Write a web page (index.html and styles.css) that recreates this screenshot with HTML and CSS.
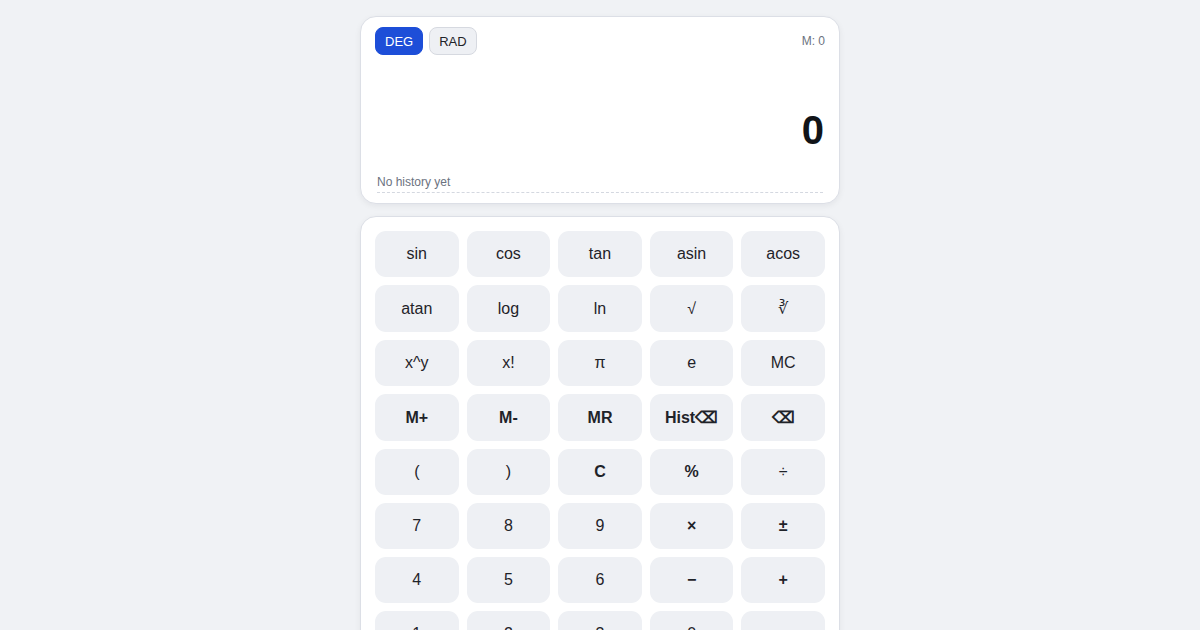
FILE: index.html
```html
<!DOCTYPE html>
<html>
<head>
    <meta charset="utf-8">
    <meta name="viewport" content="width=device-width, initial-scale=1">
    <title>Scientific Calculator</title>
    <link rel="stylesheet" href="styles.css">
</head>
<body>
    <div class="calc">
        <div class="card screen">
            <div class="screen-top">
                <div class="modes">
                    <button class="mode active">DEG</button>
                    <button class="mode">RAD</button>
                </div>
                <div class="memory">M: 0</div>
            </div>
            <div class="display">0</div>
            <div class="history">No history yet</div>
        </div>

        <div class="card keypad">
            <button class="key">sin</button>
            <button class="key">cos</button>
            <button class="key">tan</button>
            <button class="key">asin</button>
            <button class="key">acos</button>

            <button class="key">atan</button>
            <button class="key">log</button>
            <button class="key">ln</button>
            <button class="key">√</button>
            <button class="key">∛</button>

            <button class="key">x^y</button>
            <button class="key">x!</button>
            <button class="key">π</button>
            <button class="key">e</button>
            <button class="key">MC</button>

            <button class="key strong">M+</button>
            <button class="key strong">M-</button>
            <button class="key strong">MR</button>
            <button class="key strong">Hist⌫</button>
            <button class="key strong">⌫</button>

            <button class="key">(</button>
            <button class="key">)</button>
            <button class="key strong">C</button>
            <button class="key strong">%</button>
            <button class="key">÷</button>

            <button class="key">7</button>
            <button class="key">8</button>
            <button class="key">9</button>
            <button class="key strong">×</button>
            <button class="key strong">±</button>

            <button class="key">4</button>
            <button class="key">5</button>
            <button class="key">6</button>
            <button class="key strong">−</button>
            <button class="key strong">+</button>

            <button class="key">1</button>
            <button class="key">2</button>
            <button class="key">3</button>
            <button class="key">0</button>
            <button class="key">.</button>
        </div>
    </div>
</body>
</html>
```

FILE: styles.css
```css
body, html {
    margin: 0;
    padding: 0;
}

body {
    background: #f0f2f5;
    font-family: 'Liberation Sans', Arial, sans-serif;
    color: #1f2329;
}

.calc {
    width: 480px;
    margin: 16px auto 0;
    display: flex;
    flex-direction: column;
    gap: 12px;
}

.card {
    background: #ffffff;
    border: 1px solid #dcdfe6;
    border-radius: 16px;
    box-shadow: 0 2px 6px rgba(15, 23, 42, 0.06);
}

.screen {
    padding: 10px 14px;
}

.screen-top {
    display: flex;
    justify-content: space-between;
    align-items: center;
}

.modes {
    display: flex;
    gap: 6px;
}

.mode {
    height: 28px;
    padding: 0 9px;
    border: 1px solid #d6d9e0;
    border-radius: 8px;
    background: #eef0f4;
    color: #1f2329;
    font-family: inherit;
    font-size: 13px;
}

.mode.active {
    background: #1d4ed8;
    border-color: #1d4ed8;
    color: #ffffff;
}

.memory {
    font-size: 12px;
    color: #6b7280;
}

.display {
    margin-top: 51px;
    padding-right: 1px;
    text-align: right;
    font-size: 40px;
    line-height: 48px;
    font-weight: bold;
    color: #111418;
}

.history {
    margin: 20px 2px 0;
    padding-bottom: 2px;
    font-size: 12px;
    line-height: 16px;
    color: #6b7280;
    border-bottom: 1px dashed #d4d8e0;
}

.keypad {
    padding: 14px;
    display: grid;
    grid-template-columns: repeat(5, 1fr);
    gap: 8px;
}

.key {
    padding: 14px 0;
    border: none;
    border-radius: 11px;
    background: #eef0f4;
    color: #1f2329;
    font-family: inherit;
    font-size: 16px;
    cursor: pointer;
}

.key.strong {
    font-weight: bold;
}
```
